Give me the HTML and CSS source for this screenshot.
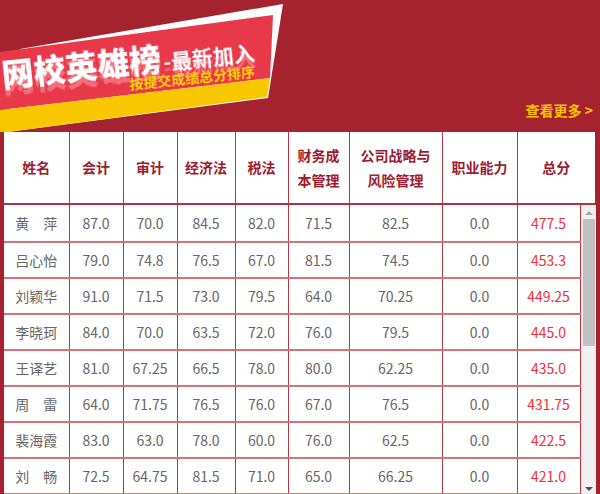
FILE: index.html
```html
<!DOCTYPE html>
<html lang="zh-CN">
<head>
<meta charset="utf-8">
<title>网校英雄榜</title>
<link rel="stylesheet" href="styles.css">
</head>
<body>
<div class="page">
  <div class="top">
    <svg class="banner" width="300" height="132" viewBox="0 0 300 132" xmlns="http://www.w3.org/2000/svg">
      <defs>
        <filter id="sh" x="-10%" y="-20%" width="120%" height="160%">
          <feDropShadow dx="0" dy="6" stdDeviation="0.6" flood-color="#ff8e9a" flood-opacity="0.6"/>
        </filter>
      </defs>
      <polygon points="20,49 283,4 268,98 0,133" fill="#ffffff"/>
      <polygon points="0,52 273,15 270,78 0,110" fill="#e8394b"/>
      <polygon points="0,110 270,78 267,97 0,133" fill="#f9c700"/>
      <text class="title" x="3" y="87" transform="rotate(-6 3 87)" filter="url(#sh)">网校英雄榜<tspan class="sub" dx="2">-最新加入</tspan></text>
      <text class="note" x="130" y="90" transform="rotate(-6 130 90)">按提交成绩总分排序</text>
    </svg>
    <a class="more" href="#">查看更多 &gt;</a>
  </div>

  <div class="board">
    <table class="head">
      <colgroup>
        <col class="c1"><col class="c2"><col class="c3"><col class="c4"><col class="c5"><col class="c6"><col class="c7"><col class="c8"><col class="c9h">
      </colgroup>
      <tr>
        <th>姓名</th><th>会计</th><th>审计</th><th>经济法</th><th>税法</th><th>财务成<br>本管理</th><th>公司战略与<br>风险管理</th><th>职业能力</th><th>总分</th>
      </tr>
    </table>
    <div class="bodywrap">
      <table class="rows">
        <colgroup>
          <col class="c1"><col class="c2"><col class="c3"><col class="c4"><col class="c5"><col class="c6"><col class="c7"><col class="c8"><col class="c9">
        </colgroup>
        <tr><td>黄　萍</td><td>87.0</td><td>70.0</td><td>84.5</td><td>82.0</td><td>71.5</td><td>82.5</td><td>0.0</td><td class="total">477.5</td></tr>
        <tr><td>吕心怡</td><td>79.0</td><td>74.8</td><td>76.5</td><td>67.0</td><td>81.5</td><td>74.5</td><td>0.0</td><td class="total">453.3</td></tr>
        <tr><td>刘颖华</td><td>91.0</td><td>71.5</td><td>73.0</td><td>79.5</td><td>64.0</td><td>70.25</td><td>0.0</td><td class="total">449.25</td></tr>
        <tr><td>李晓珂</td><td>84.0</td><td>70.0</td><td>63.5</td><td>72.0</td><td>76.0</td><td>79.5</td><td>0.0</td><td class="total">445.0</td></tr>
        <tr><td>王译艺</td><td>81.0</td><td>67.25</td><td>66.5</td><td>78.0</td><td>80.0</td><td>62.25</td><td>0.0</td><td class="total">435.0</td></tr>
        <tr><td>周　雷</td><td>64.0</td><td>71.75</td><td>76.5</td><td>76.0</td><td>67.0</td><td>76.5</td><td>0.0</td><td class="total">431.75</td></tr>
        <tr><td>裴海霞</td><td>83.0</td><td>63.0</td><td>78.0</td><td>60.0</td><td>76.0</td><td>62.5</td><td>0.0</td><td class="total">422.5</td></tr>
        <tr><td>刘　畅</td><td>72.5</td><td>64.75</td><td>81.5</td><td>71.0</td><td>65.0</td><td>66.25</td><td>0.0</td><td class="total">421.0</td></tr>
      </table>
      <div class="scrollbar">
        <span class="arrow up"></span>
        <span class="thumb"></span>
        <span class="track"></span>
        <span class="arrow down"></span>
      </div>
    </div>
  </div>
</div>
</body>
</html>
```

FILE: styles.css
```css
html, body {
  margin: 0;
  padding: 0;
}
body {
  background: #a5232e;
  font-family: "Noto Sans CJK SC", "Noto Sans", sans-serif;
  width: 600px;
  height: 494px;
  overflow: hidden;
}
.page {
  width: 600px;
}
.top {
  height: 132px;
  display: flex;
  justify-content: space-between;
  align-items: flex-end;
}
.banner {
  display: block;
}
.title {
  font-family: "Noto Sans CJK SC", sans-serif;
  font-weight: 900;
  font-size: 32px;
  fill: #ffffff;
}
.sub {
  font-size: 21px;
  font-weight: 700;
}
.note {
  font-family: "Noto Sans CJK SC", sans-serif;
  font-weight: 700;
  font-size: 14px;
  fill: #ffd200;
}
.more {
  color: #fcc200;
  font-weight: 700;
  font-size: 14px;
  line-height: 20px;
  text-decoration: none;
  margin: 0 7px 12px 0;
}
.board {
  margin-left: 4px;
  width: 592px;
}
table {
  border-collapse: collapse;
  table-layout: fixed;
  background: #ffffff;
}
.c1 { width: 65px; }
.c2 { width: 54px; }
.c3 { width: 54px; }
.c4 { width: 58px; }
.c5 { width: 53px; }
.c6 { width: 61px; }
.c7 { width: 93px; }
.c8 { width: 75px; }
.c9 { width: 63px; }
.c9h { width: 78px; }
.head {
  width: 591px;
}
.head th {
  height: 71px;
  padding: 0;
  font-size: 14px;
  font-weight: 700;
  line-height: 25px;
  color: #9d1b2c;
  border-left: 1px solid #b9323f;
  border-bottom: 2px solid #b5303c;
  text-align: center;
  vertical-align: middle;
}
.head th:first-child {
  border-left: none;
}
.bodywrap {
  display: flex;
  height: 290px;
  overflow: hidden;
}
.rows {
  width: 576px;
  align-self: flex-start;
}
.rows td {
  height: 34px;
  padding: 0;
  font-size: 14px;
  color: #666666;
  text-align: center;
  vertical-align: middle;
  border-left: 1px solid #b9323f;
  border-right: 1px solid #b9323f;
  border-bottom: 2px solid #d7727b;
}
.rows td:first-child {
  border-left: none;
}
.rows tr:first-child td {
  height: 36px;
}
.rows .total {
  color: #f52f34;
}
.scrollbar {
  width: 16px;
  background: #f0f0f0;
  display: flex;
  flex-direction: column;
  align-items: center;
  border-left: 1px solid #e6e6e6;
}
.arrow {
  width: 0;
  height: 0;
  border-left: 4px solid transparent;
  border-right: 4px solid transparent;
}
.arrow.up {
  margin-top: 6px;
  margin-bottom: 4px;
  border-bottom: 4px solid #a3a3a3;
}
.arrow.down {
  margin-top: 5px;
  margin-bottom: 4px;
  border-top: 4px solid #505050;
}
.thumb {
  width: 12px;
  height: 127px;
  background: #c1c1c1;
}
.track {
  flex: 1;
}
```
